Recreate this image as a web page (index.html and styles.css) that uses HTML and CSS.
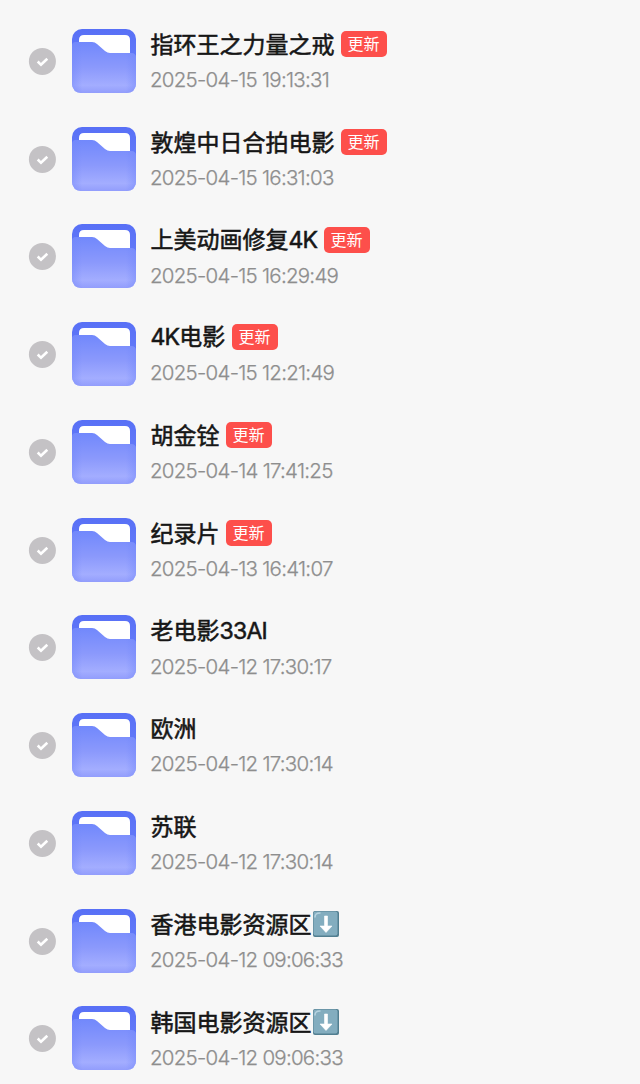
FILE: index.html
```
<!DOCTYPE html>
<html lang="zh-CN">
<head>
<meta charset="utf-8">
<title>文件列表</title>
<link rel="stylesheet" href="styles.css">
</head>
<body>
<svg class="defs" width="0" height="0" aria-hidden="true">
  <defs>
    <linearGradient id="back" x1="0" y1="0" x2="0" y2="1"><stop offset="0" stop-color="#5870f6"/><stop offset="1" stop-color="#7085fb"/></linearGradient>
    <linearGradient id="front" x1="0" y1="0" x2="0" y2="1"><stop offset="0" stop-color="#7188fc"/><stop offset=".5" stop-color="#8b99fc"/><stop offset=".85" stop-color="#a3adff"/><stop offset="1" stop-color="#929dfc"/></linearGradient>
    <linearGradient id="edge" x1="0" y1="0" x2="1" y2="0"><stop offset="0" stop-color="#7186fa" stop-opacity=".45"/><stop offset=".16" stop-color="#7186fa" stop-opacity="0"/><stop offset=".84" stop-color="#7186fa" stop-opacity="0"/><stop offset="1" stop-color="#7186fa" stop-opacity=".45"/></linearGradient>
    <symbol id="folder" viewBox="0 0 64 64">
      <rect width="64" height="64" rx="10" fill="url(#back)"/>
      <path d="M7 18V11Q7 6 12 6H53Q58 6 58 11V29H7Z" fill="#fff"/>
      <path d="M0 17Q0 13 4 13H20Q23 13 25 15L33 22Q35.500 24 38 24H59Q64 24 64 29V54Q64 64 54 64H10Q0 64 0 54Z" fill="url(#front)"/>
      <path d="M0 17Q0 13 4 13H20Q23 13 25 15L33 22Q35.500 24 38 24H59Q64 24 64 29V54Q64 64 54 64H10Q0 64 0 54Z" fill="url(#edge)"/>
    </symbol>
    <symbol id="check" viewBox="0 0 28 28"><circle cx="14.400" cy="14.400" r="13.500" fill="#c4c2c5"/><path d="M9.700 14.500L13 17.800L19.300 11.700" fill="none" stroke="#fff" stroke-width="2.600"/></symbol>
    <symbol id="down" viewBox="0 0 26 26"><rect width="26" height="26" rx="2" fill="#527f91"/><rect x=".5" y=".5" width="24" height="24" rx="2" fill="#83adbf"/><path d="M2 6Q2 2 7 2" fill="none" stroke="#b5d2df" stroke-width="1.500" stroke-linecap="round"/><path d="M11.500 5H14.500V15H19L13 21.500L7 15H11.500Z" fill="#fff" stroke="#fff" stroke-width=".6" stroke-linejoin="round"/></symbol>
  </defs>
</svg>
<main class="list">
  <div class="row"><svg class="check"><use href="#check"/></svg><svg class="folder"><use href="#folder"/></svg><div class="info"><div class="title"><span class="name">指环王之力量之戒</span><span class="badge">更新</span></div><time class="date">2025-04-15 19:13:31</time></div></div>
  <div class="row"><svg class="check"><use href="#check"/></svg><svg class="folder"><use href="#folder"/></svg><div class="info"><div class="title"><span class="name">敦煌中日合拍电影</span><span class="badge">更新</span></div><time class="date">2025-04-15 16:31:03</time></div></div>
  <div class="row"><svg class="check"><use href="#check"/></svg><svg class="folder"><use href="#folder"/></svg><div class="info"><div class="title"><span class="name">上美动画修复<span class="latin">4K</span></span><span class="badge">更新</span></div><time class="date">2025-04-15 16:29:49</time></div></div>
  <div class="row"><svg class="check"><use href="#check"/></svg><svg class="folder"><use href="#folder"/></svg><div class="info"><div class="title"><span class="name"><span class="latin">4K</span>电影</span><span class="badge">更新</span></div><time class="date">2025-04-15 12:21:49</time></div></div>
  <div class="row"><svg class="check"><use href="#check"/></svg><svg class="folder"><use href="#folder"/></svg><div class="info"><div class="title"><span class="name">胡金铨</span><span class="badge">更新</span></div><time class="date">2025-04-14 17:41:25</time></div></div>
  <div class="row"><svg class="check"><use href="#check"/></svg><svg class="folder"><use href="#folder"/></svg><div class="info"><div class="title"><span class="name">纪录片</span><span class="badge">更新</span></div><time class="date">2025-04-13 16:41:07</time></div></div>
  <div class="row"><svg class="check"><use href="#check"/></svg><svg class="folder"><use href="#folder"/></svg><div class="info"><div class="title"><span class="name">老电影<span class="latin">33AI</span></span></div><time class="date">2025-04-12 17:30:17</time></div></div>
  <div class="row"><svg class="check"><use href="#check"/></svg><svg class="folder"><use href="#folder"/></svg><div class="info"><div class="title"><span class="name">欧洲</span></div><time class="date">2025-04-12 17:30:14</time></div></div>
  <div class="row"><svg class="check"><use href="#check"/></svg><svg class="folder"><use href="#folder"/></svg><div class="info"><div class="title"><span class="name">苏联</span></div><time class="date">2025-04-12 17:30:14</time></div></div>
  <div class="row"><svg class="check"><use href="#check"/></svg><svg class="folder"><use href="#folder"/></svg><div class="info"><div class="title"><span class="name">香港电影资源区</span><svg class="down"><use href="#down"/></svg></div><time class="date">2025-04-12 09:06:33</time></div></div>
  <div class="row"><svg class="check"><use href="#check"/></svg><svg class="folder"><use href="#folder"/></svg><div class="info"><div class="title"><span class="name">韩国电影资源区</span><svg class="down"><use href="#down"/></svg></div><time class="date">2025-04-12 09:06:33</time></div></div>
</main>
</body>
</html>
```
FILE: styles.css
```
body { margin: 0; background: #f7f7f7; font-family: Inter, "Noto Sans CJK SC", sans-serif; }
.defs { display: block; }
.list { box-sizing: border-box; height: 1084px; padding-top: 11.9px; overflow: hidden; }
.row { display: flex; align-items: center; height: 97.75px; padding-left: 28px; }
.check { flex: none; width: 28px; height: 28px; margin-right: 16px; }
.folder { flex: none; width: 64px; height: 64px; margin-right: 14px; }
.info { padding-top: .8px; }
.title { display: flex; align-items: center; height: 34px; color: #161616; font: 23px/34px "Noto Sans CJK SC", sans-serif; white-space: nowrap; -webkit-text-stroke: .55px #161616; }
.name { padding-left: .4px; }
.latin { font-family: Inter, sans-serif; letter-spacing: -.7px; }
.badge { width: 46px; height: 26px; margin: 2px 0 0 6.2px; border-radius: 5px; background: #fd4f4b; color: #fff; font-size: 16px; line-height: 25px; text-align: center; -webkit-text-stroke: 0; }
.down { width: 26px; height: 26px; margin: 2px 0 0 1.6px; }
.date { display: block; height: 34px; margin-top: 2px; color: #8e8e8e; font: 300 20.5px/36px Inter, sans-serif; letter-spacing: -.74px; white-space: nowrap; -webkit-text-stroke: .25px #8e8e8e; }
```
